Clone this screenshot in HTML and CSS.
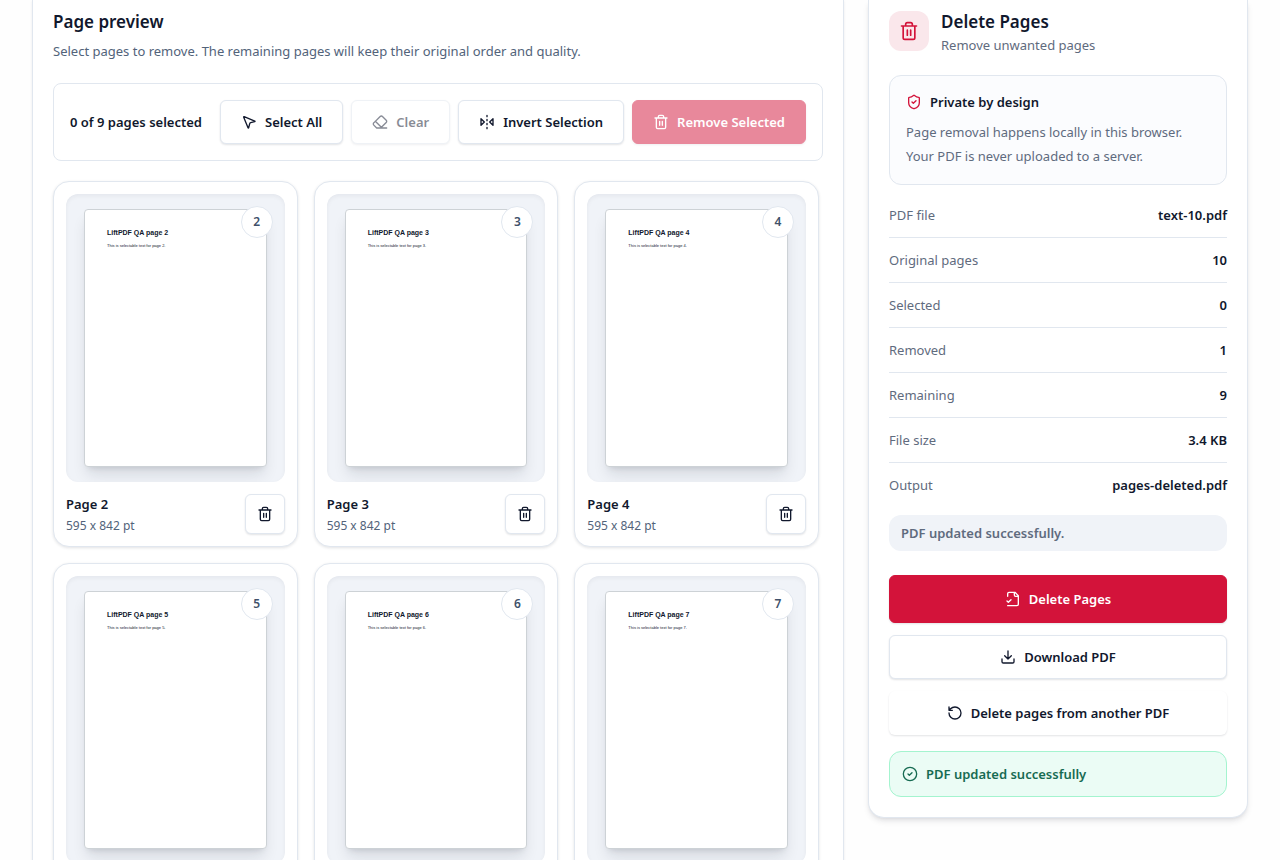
FILE: index.html
```html
<!DOCTYPE html>
<html lang="en">
<head>
    <meta charset="UTF-8">
    <meta name="viewport" content="width=device-width, initial-scale=1.0">
    <title>Delete Pages</title>
    <link rel="stylesheet" href="styles.css">
</head>
<body>

<!-- Shared icons -->
<svg class="icon-defs" aria-hidden="true">
    <symbol id="icon-trash" viewBox="0 0 24 24">
        <path d="M3 6h18M19 6v14a2 2 0 0 1-2 2H7a2 2 0 0 1-2-2V6M8 6V4a2 2 0 0 1 2-2h4a2 2 0 0 1 2 2v2M10 11v6M14 11v6"/>
    </symbol>
    <symbol id="icon-pointer" viewBox="0 0 24 24">
        <path d="M4.04 4.69a.5.5 0 0 1 .65-.65l16 6.5a.5.5 0 0 1-.06.95l-6.13 1.58a2 2 0 0 0-1.43 1.43l-1.58 6.13a.5.5 0 0 1-.95.06z"/>
    </symbol>
    <symbol id="icon-eraser" viewBox="0 0 24 24">
        <path d="m7 21-4.3-4.3c-1-1-1-2.5 0-3.4l9.6-9.6c1-1 2.5-1 3.4 0l5.6 5.6c1 1 1 2.5 0 3.4L13 21M22 21H7M5 11l9 9"/>
    </symbol>
    <symbol id="icon-flip" viewBox="0 0 24 24">
        <path d="m3 7 5 5-5 5V7M21 7l-5 5 5 5V7M12 20v2M12 14v2M12 8v2M12 2v2"/>
    </symbol>
    <symbol id="icon-shield" viewBox="0 0 24 24">
        <path d="M20 13c0 5-3.5 7.5-7.66 8.95a1 1 0 0 1-.67-.01C7.5 20.5 4 18 4 13V6a1 1 0 0 1 1-1c2 0 4.5-1.2 6.24-2.72a1.17 1.17 0 0 1 1.52 0C14.51 3.81 17 5 19 5a1 1 0 0 1 1 1zM9 12l2 2 4-4"/>
    </symbol>
    <symbol id="icon-file-check" viewBox="0 0 24 24">
        <path d="M4 22h14a2 2 0 0 0 2-2V7l-5-5H6a2 2 0 0 0-2 2v4M14 2v4a2 2 0 0 0 2 2h4M3 15l2 2 4-4"/>
    </symbol>
    <symbol id="icon-download" viewBox="0 0 24 24">
        <path d="M21 15v4a2 2 0 0 1-2 2H5a2 2 0 0 1-2-2v-4M7 10l5 5 5-5M12 15V3"/>
    </symbol>
    <symbol id="icon-rotate" viewBox="0 0 24 24">
        <path d="M3 12a9 9 0 1 0 9-9 9.75 9.75 0 0 0-6.74 2.74L3 8M3 3v5h5"/>
    </symbol>
    <symbol id="icon-check" viewBox="0 0 24 24">
        <circle cx="12" cy="12" r="10"/>
        <path d="m9 12 2 2 4-4"/>
    </symbol>
</svg>

<main class="layout">
    <section class="preview">
        <h2>Page preview</h2>
        <p class="preview-text">Select pages to remove. The remaining pages will keep their original order and quality.</p>

        <div class="toolbar">
            <span class="count">0 of 9 pages selected</span>
            <div class="toolbar-actions">
                <button type="button" class="btn"><svg class="icon"><use href="#icon-pointer"/></svg>Select All</button>
                <button type="button" class="btn" disabled><svg class="icon"><use href="#icon-eraser"/></svg>Clear</button>
                <button type="button" class="btn"><svg class="icon"><use href="#icon-flip"/></svg>Invert Selection</button>
                <button type="button" class="btn btn-primary" disabled><svg class="icon"><use href="#icon-trash"/></svg>Remove Selected</button>
            </div>
        </div>

        <div class="pages">
            <article class="page-card">
                <div class="thumb">
                    <div class="paper"><strong>LiftPDF QA page 2</strong><p>This is selectable text for page 2.</p></div>
                    <span class="badge">2</span>
                </div>
                <div class="page-info">
                    <div><h3>Page 2</h3><p>595 x 842 pt</p></div>
                    <button type="button" class="btn btn-icon" aria-label="Remove page 2"><svg class="icon"><use href="#icon-trash"/></svg></button>
                </div>
            </article>
            <article class="page-card">
                <div class="thumb">
                    <div class="paper"><strong>LiftPDF QA page 3</strong><p>This is selectable text for page 3.</p></div>
                    <span class="badge">3</span>
                </div>
                <div class="page-info">
                    <div><h3>Page 3</h3><p>595 x 842 pt</p></div>
                    <button type="button" class="btn btn-icon" aria-label="Remove page 3"><svg class="icon"><use href="#icon-trash"/></svg></button>
                </div>
            </article>
            <article class="page-card">
                <div class="thumb">
                    <div class="paper"><strong>LiftPDF QA page 4</strong><p>This is selectable text for page 4.</p></div>
                    <span class="badge">4</span>
                </div>
                <div class="page-info">
                    <div><h3>Page 4</h3><p>595 x 842 pt</p></div>
                    <button type="button" class="btn btn-icon" aria-label="Remove page 4"><svg class="icon"><use href="#icon-trash"/></svg></button>
                </div>
            </article>
            <article class="page-card">
                <div class="thumb">
                    <div class="paper"><strong>LiftPDF QA page 5</strong><p>This is selectable text for page 5.</p></div>
                    <span class="badge">5</span>
                </div>
            </article>
            <article class="page-card">
                <div class="thumb">
                    <div class="paper"><strong>LiftPDF QA page 6</strong><p>This is selectable text for page 6.</p></div>
                    <span class="badge">6</span>
                </div>
            </article>
            <article class="page-card">
                <div class="thumb">
                    <div class="paper"><strong>LiftPDF QA page 7</strong><p>This is selectable text for page 7.</p></div>
                    <span class="badge">7</span>
                </div>
            </article>
        </div>
    </section>

    <aside class="sidebar">
        <div class="sidebar-header">
            <div class="tool-icon"><svg class="icon"><use href="#icon-trash"/></svg></div>
            <div>
                <h2>Delete Pages</h2>
                <p>Remove unwanted pages</p>
            </div>
        </div>

        <div class="privacy">
            <h3><svg class="icon"><use href="#icon-shield"/></svg>Private by design</h3>
            <p>Page removal happens locally in this browser. Your PDF is never uploaded to a server.</p>
        </div>

        <dl class="details">
            <div><dt>PDF file</dt><dd>text-10.pdf</dd></div>
            <div><dt>Original pages</dt><dd>10</dd></div>
            <div><dt>Selected</dt><dd>0</dd></div>
            <div><dt>Removed</dt><dd>1</dd></div>
            <div><dt>Remaining</dt><dd>9</dd></div>
            <div><dt>File size</dt><dd>3.4 KB</dd></div>
            <div><dt>Output</dt><dd>pages-deleted.pdf</dd></div>
        </dl>

        <p class="status">PDF updated successfully.</p>

        <div class="actions">
            <button type="button" class="btn btn-primary btn-large"><svg class="icon"><use href="#icon-file-check"/></svg>Delete Pages</button>
            <button type="button" class="btn"><svg class="icon"><use href="#icon-download"/></svg>Download PDF</button>
            <button type="button" class="btn btn-ghost"><svg class="icon"><use href="#icon-rotate"/></svg>Delete pages from another PDF</button>
        </div>

        <p class="success"><svg class="icon"><use href="#icon-check"/></svg>PDF updated successfully</p>
    </aside>
</main>

</body>
</html>
```

FILE: styles.css
```css
* {
    box-sizing: border-box;
}
body {
    margin: 0;
    background: #fefefe;
    color: #11182d;
    font-family: "Segoe UI", "Noto Sans", "Open Sans", sans-serif;
    font-size: 13px;
    line-height: 20px;
}
h2, h3, p, dl, dd {
    margin: 0;
}
h2 {
    font-size: 17px;
    font-weight: 600;
    line-height: 28px;
}
h3 {
    font-size: 13px;
    font-weight: 600;
}
.icon-defs {
    position: absolute;
    width: 0;
    height: 0;
}
.icon {
    width: 16px;
    height: 16px;
    flex-shrink: 0;
    fill: none;
    stroke: currentColor;
    stroke-width: 2;
    stroke-linecap: round;
    stroke-linejoin: round;
}

/* Layout */
.layout {
    display: grid;
    grid-template-columns: minmax(0, 1fr) 380px;
    gap: 24px;
    align-items: start;
    padding: 0 32px;
}
.preview, .sidebar {
    background: #fff;
    border: 1px solid #e1e7ef;
    border-top: 0;
    border-radius: 0 0 16px 16px;
    box-shadow: 0 1px 3px rgba(15, 23, 42, 0.08);
}
.preview {
    padding: 8px 20px 20px;
}
.preview-text {
    margin-top: 5px;
    color: #52637a;
}

/* Buttons */
.btn {
    display: inline-flex;
    align-items: center;
    justify-content: center;
    gap: 8px;
    height: 44px;
    padding: 0 20px;
    border: 1px solid #e1e7ef;
    border-radius: 6px;
    background: #fff;
    color: #11182d;
    font: inherit;
    font-weight: 600;
    white-space: nowrap;
    box-shadow: 0 1px 2px rgba(15, 23, 42, 0.12);
}
.btn:disabled {
    opacity: 0.5;
}
.btn-primary {
    border-color: #d3133a;
    background: #d3133a;
    color: #fff;
}
.btn-large {
    height: 48px;
}
.btn-ghost {
    border-color: transparent;
}
.btn-icon {
    width: 40px;
    height: 40px;
    padding: 0;
}

/* Toolbar */
.toolbar {
    display: flex;
    align-items: center;
    justify-content: space-between;
    margin-top: 22px;
    padding: 16px;
    border: 1px solid #e1e7ef;
    border-radius: 8px;
}
.count {
    font-weight: 600;
}
.toolbar-actions {
    display: flex;
    gap: 8px;
}

/* Page cards */
.pages {
    display: grid;
    grid-template-columns: repeat(3, minmax(0, 1fr));
    gap: 16px;
    margin-top: 20px;
    padding-right: 4px;
}
.page-card {
    padding: 12px;
    border: 1px solid #e1e7ef;
    border-radius: 16px;
    background: #fff;
    box-shadow: 0 1px 3px rgba(15, 23, 42, 0.12);
}
.thumb {
    position: relative;
    display: flex;
    align-items: center;
    height: 288px;
    padding: 0 18px;
    border-radius: 12px;
    background: #f0f3f8;
    box-shadow: inset 0 2px 4px rgba(15, 23, 42, 0.05);
    overflow: hidden;
}
.paper {
    flex: 1;
    height: 258px;
    padding: 19px 22px;
    border: 1px solid #cdd2d6;
    border-radius: 4px;
    background: #fff;
    box-shadow: 0 10px 15px -3px rgba(15, 23, 42, 0.12), 0 4px 6px -4px rgba(15, 23, 42, 0.15);
    font-family: "Liberation Sans", Arial, sans-serif;
    font-size: 4px;
    line-height: 8px;
    white-space: nowrap;
}
.paper strong {
    font-size: 7px;
}
.paper p {
    margin-top: 4px;
}
.badge {
    position: absolute;
    top: 12px;
    right: 12px;
    width: 32px;
    height: 32px;
    border: 1px solid #e1e7ef;
    border-radius: 50%;
    background: #fff;
    color: #40516a;
    font-size: 12px;
    font-weight: 600;
    line-height: 30px;
    text-align: center;
}
.page-info {
    display: flex;
    align-items: center;
    justify-content: space-between;
    margin-top: 12px;
}
.page-info p {
    margin-top: 4px;
    color: #52637a;
    font-size: 12px;
    line-height: 16px;
}

/* Sidebar */
.sidebar {
    padding: 8px 20px 20px;
    box-shadow: 0 4px 6px -1px rgba(15, 23, 42, 0.1), 0 2px 4px -2px rgba(15, 23, 42, 0.1);
}
.sidebar-header {
    display: flex;
    align-items: center;
    gap: 12px;
}
.sidebar-header p {
    color: #5f6b7e;
    line-height: 18px;
}
.tool-icon {
    display: flex;
    align-items: center;
    justify-content: center;
    width: 40px;
    height: 40px;
    border-radius: 12px;
    background: #fae7eb;
    color: #d3133a;
}
.tool-icon .icon {
    width: 20px;
    height: 20px;
}
.privacy {
    margin-top: 21px;
    padding: 16px;
    border: 1px solid #e1e7ef;
    border-radius: 12px;
    background: #fbfcfe;
}
.privacy h3 {
    display: flex;
    align-items: center;
    gap: 8px;
}
.privacy .icon {
    color: #d3133a;
}
.privacy p {
    margin-top: 8px;
    color: #5f6b7e;
    line-height: 24px;
}
.details {
    margin-top: 8px;
}
.details div {
    display: flex;
    justify-content: space-between;
    padding: 12px 0;
    border-bottom: 1px solid #e1e7ef;
}
.details div:last-child {
    border-bottom: 0;
}
.details dt {
    color: #5f6b7e;
}
.details dd {
    font-weight: 600;
}
.status {
    margin-top: 8px;
    padding: 8px 12px;
    border-radius: 12px;
    background: #f0f3f8;
    color: #5f6b7e;
    font-weight: 600;
}
.actions {
    display: flex;
    flex-direction: column;
    gap: 12px;
    margin-top: 24px;
}
.success {
    display: flex;
    align-items: center;
    gap: 8px;
    margin-top: 16px;
    padding: 12px;
    border: 1px solid #a4f4cf;
    border-radius: 12px;
    background: #ebfcf5;
    color: #176b52;
    font-weight: 600;
}
```
